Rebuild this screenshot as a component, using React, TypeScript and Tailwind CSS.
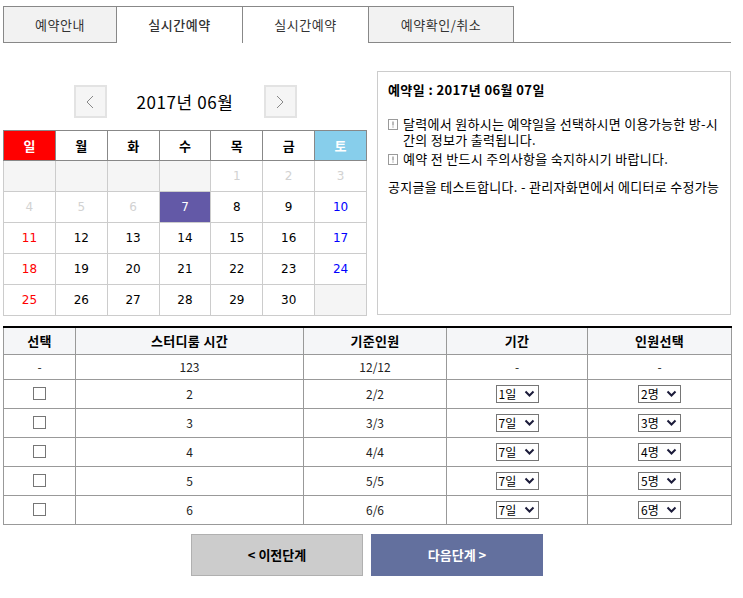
import { useState } from 'react';

const font = { fontFamily: '"Noto Sans CJK KR", "Noto Sans", sans-serif' };

type Day = { n: number | null; muted?: boolean };

const weeks: Day[][] = [
  [{ n: null }, { n: null }, { n: null }, { n: null }, { n: 1, muted: true }, { n: 2, muted: true }, { n: 3, muted: true }],
  [{ n: 4, muted: true }, { n: 5, muted: true }, { n: 6, muted: true }, { n: 7 }, { n: 8 }, { n: 9 }, { n: 10 }],
  [{ n: 11 }, { n: 12 }, { n: 13 }, { n: 14 }, { n: 15 }, { n: 16 }, { n: 17 }],
  [{ n: 18 }, { n: 19 }, { n: 20 }, { n: 21 }, { n: 22 }, { n: 23 }, { n: 24 }],
  [{ n: 25 }, { n: 26 }, { n: 27 }, { n: 28 }, { n: 29 }, { n: 30 }, { n: null }],
];

const rooms = [
  { name: '2', cap: '2/2', period: '1일', people: '2명' },
  { name: '3', cap: '3/3', period: '7일', people: '3명' },
  { name: '4', cap: '4/4', period: '7일', people: '4명' },
  { name: '5', cap: '5/5', period: '7일', people: '5명' },
  { name: '6', cap: '6/6', period: '7일', people: '6명' },
];

function FakeSelect({ label }: { label: string }) {
  return (
    <div className="inline-flex items-center h-[18px] w-[43px] border border-[#767676] bg-white pl-[2px] pr-[3px] justify-between text-[12px] leading-none text-black align-middle">
      <span>{label}</span>
      <svg width="11" height="8" viewBox="0 0 11 8">
        <polyline points="1.5,1.5 5.5,5.5 9.5,1.5" fill="none" stroke="#1b1b3a" strokeWidth="2" />
      </svg>
    </div>
  );
}

function Notice() {
  return (
    <svg width="10" height="11" viewBox="0 0 10 11" className="shrink-0 mt-[3px]">
      <rect x="0.5" y="0.5" width="9" height="10" fill="white" stroke="#9a9a9a" />
      <line x1="5" y1="2.5" x2="5" y2="6.5" stroke="#777" strokeWidth="1" />
      <line x1="5" y1="7.5" x2="5" y2="8.5" stroke="#777" strokeWidth="1" />
    </svg>
  );
}

export default function App() {
  const [tab, setTab] = useState(1);
  const tabs = [
    { label: '예약안내', w: 'w-[113px]', active: false },
    { label: '실시간예약', w: 'w-[126px]', active: true },
    { label: '실시간예약', w: 'w-[126px]', active: true },
    { label: '예약확인/취소', w: 'w-[146px]', active: false },
  ];

  return (
    <div className="w-[743px] bg-white text-black pl-[3px] pr-[12px]" style={font}>
      {/* tabs */}
      <div className="flex mt-[6px] h-[37px]">
        {tabs.map((t, i) => (
          <button
            key={i}
            onClick={() => setTab(i)}
            className={`${t.w} h-full border-t border-l border-[#888] text-[13px] tracking-[0.5px] text-[#333] ${i === 3 ? 'border-r' : ''} ${t.active ? 'bg-white' : 'bg-[#f2f2f2] border-b'} ${tab === i ? 'font-medium' : ''}`}
          >
            {t.label}
          </button>
        ))}
        <div className="flex-1 border-b border-[#888]" />
      </div>

      {/* calendar + info */}
      <div className="flex items-start gap-[10px] mt-[28px]">
        <div className="w-[364px] pt-[14px]">
          <div className="flex items-center justify-center h-[33px]">
            <button className="w-[33px] h-[33px] border-2 border-[#e3e3e3] bg-[#f5f5f5] flex items-center justify-center">
              <svg width="8" height="14" viewBox="0 0 8 14"><polyline points="7,1 1,7 7,13" fill="none" stroke="#888" strokeWidth="1" /></svg>
            </button>
            <div className="w-[157px] text-center text-[17px] tracking-[0.6px]">2017년 06월</div>
            <button className="w-[33px] h-[33px] border-2 border-[#e3e3e3] bg-[#f5f5f5] flex items-center justify-center">
              <svg width="8" height="14" viewBox="0 0 8 14"><polyline points="1,1 7,7 1,13" fill="none" stroke="#888" strokeWidth="1" /></svg>
            </button>
          </div>
          <table className="w-[364px] table-fixed border-collapse mt-[12px]">
            <thead>
              <tr className="h-[30px]">
                {['일', '월', '화', '수', '목', '금', '토'].map((d, i) => (
                  <th
                    key={d}
                    className={`border border-[#888] text-[13px] font-bold ${i === 0 ? 'bg-[#ff0000] text-white' : i === 6 ? 'bg-[#87ceeb] text-white' : 'bg-white text-black'}`}
                  >
                    {d}
                  </th>
                ))}
              </tr>
            </thead>
            <tbody>
              {weeks.map((w, r) => (
                <tr key={r} className="h-[31px]">
                  {w.map((d, i) => {
                    const sel = d.n === 7;
                    const color = d.muted
                      ? 'text-[#d2d2d2]'
                      : sel
                      ? 'text-white'
                      : i === 0
                      ? 'text-[#ff0000]'
                      : i === 6
                      ? 'text-[#0000ff]'
                      : 'text-black';
                    const bg = d.n === null ? 'bg-[#f5f5f5]' : sel ? 'bg-[#6359a7]' : 'bg-white';
                    return (
                      <td
                        key={i}
                        className={`border border-[#ccc] text-center text-[12px] ${bg} ${color}`}
                        style={{ fontFamily: 'Tahoma, "DejaVu Sans", sans-serif' }}
                      >
                        {d.n ?? ''}
                      </td>
                    );
                  })}
                </tr>
              ))}
            </tbody>
          </table>
        </div>

        <div className="w-[354px] h-[244px] border border-[#ccc] px-[10px] pt-[10px] text-[13px] tracking-[0.3px] leading-[16px]">
          <div className="font-bold tracking-[0.4px]">예약일 : 2017년 06월 07일</div>
          <div className="mt-[18px] flex flex-col gap-[3px]">
            <div className="flex gap-[5px]">
              <Notice />
              <span>달력에서 원하시는 예약일을 선택하시면 이용가능한 방-시간의 정보가 출력됩니다.</span>
            </div>
            <div className="flex gap-[5px]">
              <Notice />
              <span>예약 전 반드시 주의사항을 숙지하시기 바랍니다.</span>
            </div>
          </div>
          <div className="mt-[12px]">공지글을 테스트합니다. - 관리자화면에서 에디터로 수정가능</div>
        </div>
      </div>

      {/* rooms */}
      <table className="w-[728px] table-fixed border-collapse mt-[10px] border-t-2 border-t-black text-[12px]">
        <colgroup>
          <col className="w-[72px]" />
          <col className="w-[228px]" />
          <col className="w-[143px]" />
          <col className="w-[141px]" />
          <col className="w-[144px]" />
        </colgroup>
        <thead>
          <tr className="h-[27px] bg-[#f5f6f8]">
            {['선택', '스터디룸 시간', '기준인원', '기간', '인원선택'].map((h) => (
              <th key={h} className="border border-[#999] border-t-black font-bold text-[13px] tracking-[0.3px]">
                {h}
              </th>
            ))}
          </tr>
        </thead>
        <tbody className="text-center text-[#222]">
          <tr className="h-[25px]">
            <td className="border border-[#999]">-</td>
            <td className="border border-[#999]">123</td>
            <td className="border border-[#999]">12/12</td>
            <td className="border border-[#999]">-</td>
            <td className="border border-[#999]">-</td>
          </tr>
          {rooms.map((r) => (
            <tr key={r.name} className="h-[29px]">
              <td className="border border-[#999]">
                <div className="mx-auto w-[13px] h-[13px] border border-[#767676] bg-white" />
              </td>
              <td className="border border-[#999]">{r.name}</td>
              <td className="border border-[#999]">{r.cap}</td>
              <td className="border border-[#999]">
                <FakeSelect label={r.period} />
              </td>
              <td className="border border-[#999]">
                <FakeSelect label={r.people} />
              </td>
            </tr>
          ))}
        </tbody>
      </table>

      {/* buttons */}
      <div className="flex justify-center gap-[8px] mt-[9px] w-[728px] pb-[22px]">
        <button className="w-[172px] h-[42px] bg-[#cccccc] border border-[#b0b0b0] text-[13px] font-bold text-black">
          &lt; 이전단계
        </button>
        <button className="w-[172px] h-[42px] bg-[#63709e] text-[13px] font-bold text-white">다음단계 &gt;</button>
      </div>
    </div>
  );
}
